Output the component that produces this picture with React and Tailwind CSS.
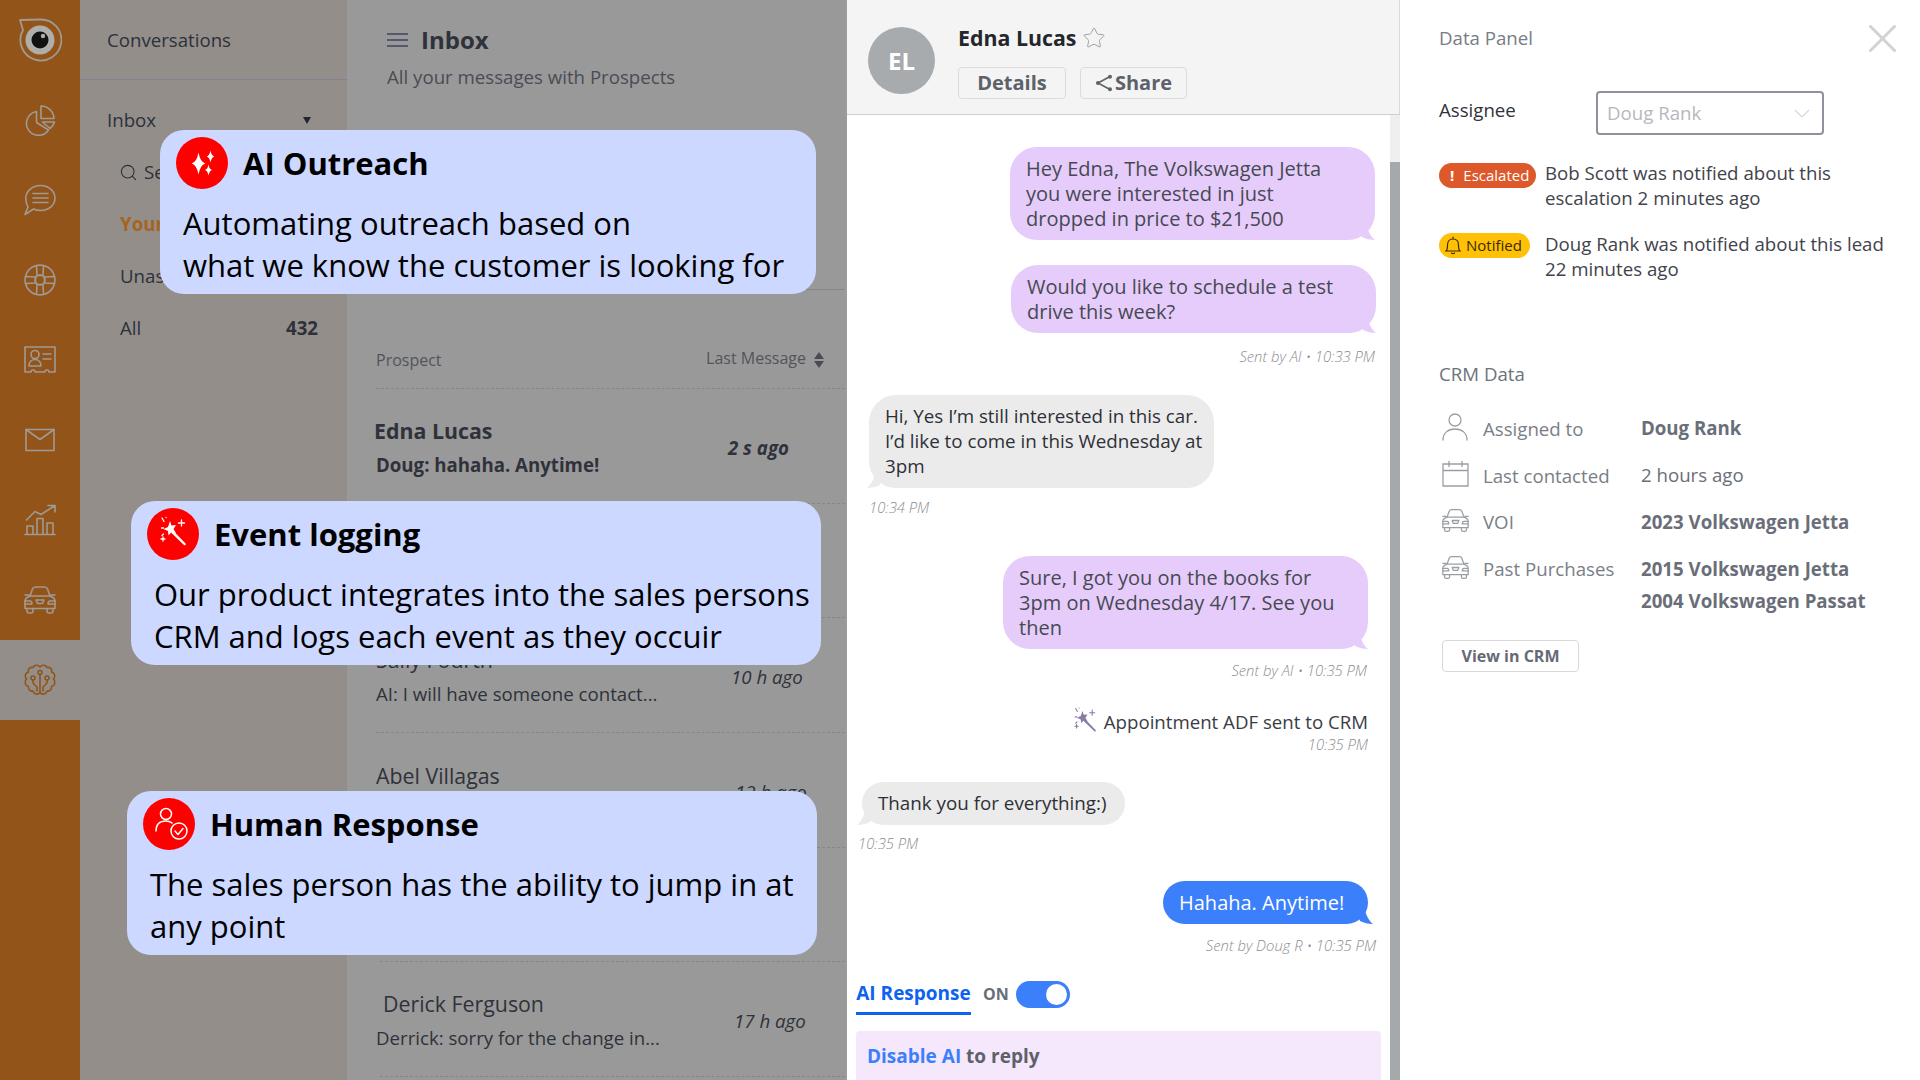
import React from "react";
import { Search, Star } from "lucide-react";

const FONT = { fontFamily: '"Open Sans", sans-serif' };

function Svg({ size = 32, color = "#a09a94", width = 1.6, children, className = "" }) {
  return (
    <svg width={size} height={size} viewBox="0 0 32 32" fill="none" stroke={color} strokeWidth={width} strokeLinecap="round" strokeLinejoin="round" className={className}>
      {children}
    </svg>
  );
}

function Logo() {
  return (
    <svg width="44" height="44" viewBox="0 0 44 44" fill="none">
      <path d="M2 2 L22 1.5 A20.5 20.5 0 1 1 5 12 Z" stroke="#a09a94" strokeWidth="1.8" strokeLinejoin="round" />
      <circle cx="22" cy="22" r="14.5" fill="#b0aeab" />
      <circle cx="22" cy="22" r="8.5" fill="#111" />
      <circle cx="25" cy="18" r="2.2" fill="#b0aeab" />
    </svg>
  );
}

const PieIcon = () => (
  <Svg>
    <path d="M12.5 7.5 A12 12 0 1 0 24.5 26 L12.5 18.5 Z" />
    <path d="M17 2 A13 13 0 0 1 30 14.5 L17 14.5 Z" />
    <path d="M18.5 18 L30.5 18 A13 13 0 0 1 26 24.5 Z" />
  </Svg>
);
const ChatIcon = () => (
  <Svg>
    <path d="M16.5 1.5 C25 1.5 31 7.5 31 14 C31 21 25 26.5 16.5 26.5 C14 26.5 11.5 26 9.5 25 L1 30.5 L4 23 C2.5 20.5 1.8 17.5 1.8 14 C1.8 7.5 8 1.5 16.5 1.5 Z" />
    <path d="M9 9.5 H24 M9 14 H24 M9 18.5 H24" />
  </Svg>
);
const BuoyIcon = () => (
  <Svg>
    <circle cx="16" cy="16" r="5" />
    <path d="M12.5 1.5 A15 15 0 0 1 19.5 1.5 L19 11.5 L13 11.5 Z" />
    <path d="M12.5 30.5 A15 15 0 0 0 19.5 30.5 L19 20.5 L13 20.5 Z" />
    <path d="M1.5 12.5 A15 15 0 0 0 1.5 19.5 L11.5 19 L11.5 13 Z" />
    <path d="M30.5 12.5 A15 15 0 0 1 30.5 19.5 L20.5 19 L20.5 13 Z" />
    <path d="M12.5 1.5 A15 15 0 0 0 1.5 12.5 M19.5 1.5 A15 15 0 0 1 30.5 12.5 M1.5 19.5 A15 15 0 0 0 12.5 30.5 M19.5 30.5 A15 15 0 0 0 30.5 19.5" />
  </Svg>
);
const CardIcon = () => (
  <Svg>
    <path d="M1 3 H31 V28 H25 A2 2 0 0 0 21 28 H11 A2 2 0 0 0 7 28 H1 Z" />
    <circle cx="11" cy="10.5" r="4" />
    <path d="M5 22 C5 17.5 8 15.5 11 15.5 C14 15.5 17 17.5 17 22 Z" />
    <path d="M19 10 H27 M19 15 H27" />
  </Svg>
);
const MailIcon = () => (
  <Svg>
    <path d="M2 5.5 H30 V26.5 H2 Z" />
    <path d="M2 5.5 L16 15.5 L30 5.5" />
  </Svg>
);
const ChartIcon = () => (
  <Svg>
    <path d="M1 30.5 H31" />
    <path d="M3 30 V22 H9 V30 M13 30 V14.5 H19 V30 M23 30 V19 H29 V30" />
    <path d="M2.5 16 L11 7.5 L17 10.5 L31 1.5 M24 1.5 H31 V8" />
  </Svg>
);

function CarIcon({ color = "#a09a94", size = 32, width = 1.6 }) {
  return (
    <Svg color={color} size={size} width={width}>
      <path d="M6 12 L8.5 5 C9 3.5 10 3 11.5 3 H20.5 C22 3 23 3.5 23.5 5 L26 12" />
      <path d="M1 11 H5 M27 11 H31" />
      <path d="M3 13.5 L6 12 H26 L29 13.5 C30.5 14.5 31 15.5 31 17 V24.5 H1 V17 C1 15.5 1.5 14.5 3 13.5 Z" />
      <path d="M3 24.5 V27 C3 28.5 4 29 5 29 H7 C8 29 9 28.5 9 27 V24.5 M23 24.5 V27 C23 28.5 24 29 25 29 H27 C28 29 29 28.5 29 27 V24.5" />
      <path d="M1 17 H6 C7.5 17 8 18 8 20 H1 M31 17 H26 C24.5 17 24 18 24 20 H31 M12 16 H20 L18.5 19.5 H13.5 Z" />
    </Svg>
  );
}

const BrainIcon = () => (
  <Svg color="#925418">
    <path d="M16 3 C14 0.5 10 0.8 9 3.5 C6 3 3.5 5 4.5 8 C1.5 9 0 12 2.5 15 C0 18 1.5 22 4.5 22.5 C4 25.5 6.5 27.5 9 27 C10 30.5 14 31 16 28.5 C18 31 22 30.5 23 27 C25.5 27.5 28 25.5 27.5 22.5 C30.5 22 32 18 29.5 15 C32 12 30.5 9 27.5 8 C28.5 5 26 3 23 3.5 C22 0.8 18 0.5 16 3 Z" />
    <circle cx="16" cy="8.5" r="2" />
    <path d="M16 10.5 V28" />
    <circle cx="9" cy="14" r="2" />
    <path d="M9 16 V19 L13 23 V27" />
    <circle cx="23" cy="14" r="2" />
    <path d="M23 16 V19 L19 23 V27" />
  </Svg>
);

const SparkleStar = ({ x, y, r }) => (
  <path d={`M${x} ${y - r} Q${x + r * 0.15} ${y - r * 0.15} ${x + r * 0.62} ${y} Q${x + r * 0.15} ${y + r * 0.15} ${x} ${y + r} Q${x - r * 0.15} ${y + r * 0.15} ${x - r * 0.62} ${y} Q${x - r * 0.15} ${y - r * 0.15} ${x} ${y - r} Z`} fill="#fff" />
);

const SparkIcon = () => (
  <svg width="52" height="52" viewBox="0 0 52 52">
    <SparkleStar x={22.5} y={26.5} r={11} />
    <SparkleStar x={34.5} y={19.5} r={6} />
    <SparkleStar x={32.5} y={33} r={5.5} />
  </svg>
);

function WandGlyph({ color = "#fff", size = 52, className = "" }) {
  return (
    <svg width={size} height={size} viewBox="0 0 52 52" fill={color} className={className}>
      <path d="M25.5 22 L38.5 35.5 C39.5 36.5 38 38 37 37 L23.5 24 Z" />
      <path d="M23 13 L24.5 17.5 L29 17 L26.5 21 L29 25 L24.5 24 L21.5 27.5 L21 23 L16.5 21 L21 19 Z" />
      <path d="M34.5 12 V18 M31.5 15 H37.5 M15 10 L17 13.5 M19 9.5 V9.6 M14.5 20 H16.5 M16.5 26 L15 27.5 M16 29 V33 M14 31 H18" stroke={color} strokeWidth="1.3" strokeLinecap="round" fill="none" />
    </svg>
  );
}

const HumanIcon = () => (
  <svg width="52" height="52" viewBox="0 0 52 52" fill="none" stroke="#fff" strokeWidth="1.5" strokeLinecap="round" strokeLinejoin="round">
    <circle cx="23" cy="16" r="5.5" />
    <path d="M13 33 C13 26 17 23 23 23 C25 23 27 23.5 29 25" />
    <circle cx="36" cy="33" r="8" />
    <path d="M32 33 L35 36.5 L40 30.5" />
  </svg>
);

function Callout({ className, icon, title, lines }) {
  return (
    <div className={`absolute z-10 h-[164px] rounded-[24px] bg-[#ccd8ff] text-black ${className}`}>
      <div className="flex items-center h-[66px] pl-[16px]">
        <div className="w-[52px] h-[52px] rounded-full bg-[#ff0000] shrink-0">{icon}</div>
        <div className="ml-[15px] text-[31px] font-bold leading-[42px]">{title}</div>
      </div>
      <div className="pl-[23px] mt-[6px] text-[31px] leading-[42px] whitespace-nowrap">
        {lines.map((line) => (
          <div key={line}>{line}</div>
        ))}
      </div>
    </div>
  );
}

const navIcons = [
  <PieIcon key="pie" />,
  <ChatIcon key="chat" />,
  <BuoyIcon key="buoy" />,
  <CardIcon key="card" />,
  <MailIcon key="mail" />,
  <ChartIcon key="chart" />,
  <CarIcon key="car" />,
];

function Sidebar() {
  return (
    <div className="w-[80px] shrink-0 bg-[#925418] flex flex-col">
      <div className="h-[80px] flex items-center justify-center">
        <Logo />
      </div>
      {navIcons.map((icon, i) => (
        <div key={i} className="h-[80px] flex items-center justify-center">
          {icon}
        </div>
      ))}
      <div className="h-[80px] bg-[#938e8a] flex items-center justify-center">
        <BrainIcon />
      </div>
    </div>
  );
}

function ConversationsPanel() {
  return (
    <div className="w-[267px] shrink-0 bg-[#938e8a] text-[18.67px] text-[#2d313b]">
      <div className="h-[80px] border-b border-[#7f828f] pl-[27px] flex items-center">Conversations</div>
      <div className="pt-[14px]">
        <div className="h-[52px] pl-[27px] pr-[36px] flex items-center justify-between">
          <span>Inbox</span>
          <span className="w-0 h-0 border-x-[4px] border-x-transparent border-t-[7px] border-t-[#22262f]" />
        </div>
        <div className="h-[52px] pl-[39px] flex items-center gap-[6px]">
          <Search size={19} strokeWidth={1.4} />
          <span>Search</span>
        </div>
        <div className="h-[52px] pl-[40px] flex items-center font-bold text-[#a5641f]">Your</div>
        <div className="h-[52px] pl-[40px] flex items-center">Unassigned</div>
        <div className="h-[52px] pl-[40px] pr-[29px] flex items-center justify-between">
          <span>All</span>
          <span className="font-bold">432</span>
        </div>
      </div>
    </div>
  );
}

function ProspectRow({ name, msg, time, bold, nameClass = "", msgClass = "", timeClass = "", lineClass = "ml-[29px]" }) {
  return (
    <div className={`h-[114.67px] border-b border-dashed border-[#85858a] pt-[4px] flex items-center ${lineClass}`}>
      <div className={`w-[350px] shrink-0 ${bold ? "font-bold" : ""}`}>
        <div className={`text-[21.33px] leading-[34px] ${nameClass}`}>{name}</div>
        <div className={`text-[18.67px] leading-[34px] ${msgClass}`}>{msg}</div>
      </div>
      <div className={`text-[18.67px] italic whitespace-nowrap ${bold ? "font-bold" : ""} ${timeClass}`}>{time}</div>
    </div>
  );
}

function ProspectsPanel() {
  return (
    <div className="w-[498px] shrink-0 bg-[#999999] text-[#2f323a]">
      <div className="h-[290px] border-b border-[#85858a] pl-[40px]">
        <div className="pt-[23px] flex items-center h-[57px]">
          <div className="w-[21px] flex flex-col gap-[4px]">
            <div className="h-[2px] bg-[#55586a]" />
            <div className="h-[2px] bg-[#55586a]" />
            <div className="h-[2px] bg-[#55586a]" />
          </div>
          <div className="ml-[13px] text-[24px] font-bold leading-[34px]">Inbox</div>
        </div>
        <div className="mt-[7px] text-[18.67px] leading-[26px] text-[#4a4c55]">All your messages with Prospects</div>
      </div>
      <div className="ml-[29px] h-[99px] border-b border-dashed border-[#85858a] flex items-center justify-between pr-[21px] pt-[41px] text-[16px] text-[#52545c]">
        <span>Prospect</span>
        <span className="flex items-center gap-[8px]">
          <span className="-mt-[4px]">Last Message</span>
          <span className="flex flex-col gap-[2px]">
            <span className="w-0 h-0 border-x-[5px] border-x-transparent border-b-[7px] border-b-[#4a4c55]" />
            <span className="w-0 h-0 border-x-[5px] border-x-transparent border-t-[7px] border-t-[#4a4c55]" />
          </span>
        </span>
      </div>
      <ProspectRow bold name="Edna Lucas" msg="Doug: hahaha. Anytime!" time="2 s ago" nameClass="-ml-[2px]" timeClass="ml-[2px]" />
      <ProspectRow />
      <ProspectRow name="Sally Fourth" msg="AI: I will have someone contact..." time="10 h ago" timeClass="ml-[5px]" />
      <ProspectRow name="Abel Villagas" msg="" time="12 h ago" nameClass="mb-[32px]" timeClass="ml-[9px]" />
      <ProspectRow lineClass="ml-[33px]" />
      <ProspectRow name="Derick Ferguson" msg="Derrick: sorry for the change in..." time="17 h ago" nameClass="pl-[3px]" msgClass="-ml-[4px]" timeClass="ml-[4px]" lineClass="ml-[33px]" />
    </div>
  );
}

function Bubble({ kind, className, tail = "", children }) {
  const styles = {
    ai: "bg-[#e6ccfa] text-[#464953] text-[20px]",
    them: "bg-[#ebebeb] text-[#2e3037] text-[18.8px]",
    me: "bg-[#3b7ffb] text-white text-[20px]",
  };
  const fill = { ai: "#e6ccfa", them: "#ebebeb", me: "#3b7ffb" }[kind];
  const left = kind === "them";
  return (
    <div className={`relative rounded-[27px] px-[16px] py-[9px] leading-[25px] ${styles[kind]} ${className}`}>
      {children}
      <svg width="16" height="14" viewBox="0 0 16 14" className={`absolute bottom-0 ${tail}`}>
        {left ? <path d="M16 0 H8 C7 5 4 11 0 14 C5 14 9 13 13 11 Z" fill={fill} /> : <path d="M0 0 H8 C9 5 12 11 16 14 C11 14 7 13 3 11 Z" fill={fill} />}
      </svg>
    </div>
  );
}

const Meta = ({ className, children }) => (
  <div className={`text-[14.8px] leading-[20px] italic font-light text-[#8c8d90] ${className}`}>{children}</div>
);

function ChatPanel() {
  return (
    <div className="w-[555px] shrink-0 border-l-[2px] border-[#9b9b9b] flex flex-col bg-white">
      <div className="h-[115px] shrink-0 bg-[#f4f4f4] border-b border-[#cfcfcf] border-r border-r-[#d8d8d8] flex pl-[21px] pt-[27px]">
        <div className="w-[67px] h-[67px] rounded-full bg-[#a7abad] text-white text-[24px] font-bold flex items-center justify-center">EL</div>
        <div className="ml-[23px]">
          <div className="flex items-center h-[24px] mt-[-1px]">
            <span className="text-[21.33px] font-bold text-[#24262c] leading-[24px]">Edna Lucas</span>
            <Star size={24} strokeWidth={1} className="ml-[6px] text-[#9ea1a6]" />
          </div>
          <div className="flex gap-[14px] mt-[17px] text-[20px] font-bold text-[#5d6169]">
            <div className="w-[108px] h-[32px] rounded-[4px] border border-[#dcdcdc] flex items-center justify-center">Details</div>
            <div className="w-[107px] h-[32px] rounded-[4px] border border-[#dcdcdc] flex items-center justify-center gap-[2px]">
              <svg width="18" height="18" viewBox="0 0 18 18" fill="none" stroke="#5d6169" strokeWidth="1.6">
                <path d="M15 2.5 L3 9 L15 15.5" />
                <circle cx="15" cy="2.8" r="1.2" fill="#5d6169" />
                <circle cx="3" cy="9" r="1.2" fill="#5d6169" />
                <circle cx="15" cy="15.2" r="1.2" fill="#5d6169" />
              </svg>
              Share
            </div>
          </div>
        </div>
      </div>
      <div className="flex flex-1 min-h-0">
        <div className="flex-1 flex flex-col overflow-hidden pt-[32px]">
          <Bubble kind="ai" tail="right-0" className="self-end mr-[15px] w-[365px]">
            Hey Edna, The Volkswagen Jetta you were interested in just dropped in price to $21,500
          </Bubble>
          <Bubble kind="ai" tail="right-0" className="self-end mr-[14px] w-[365px] mt-[25px]">
            Would you like to schedule a test drive this week?
          </Bubble>
          <Meta className="self-end mr-[15px] mt-[13px]">Sent by AI • 10:33 PM</Meta>
          <Bubble kind="them" tail="-left-[2px]" className="self-start ml-[22px] w-[345px] mt-[29px] whitespace-nowrap">
            Hi, Yes I’m still interested in this car.
            <br />
            I’d like to come in this Wednesday at
            <br />
            3pm
          </Bubble>
          <Meta className="self-start ml-[22px] mt-[9px]">10:34 PM</Meta>
          <Bubble kind="ai" tail="right-0" className="self-end mr-[22px] w-[365px] mt-[39px]">
            Sure, I got you on the books for 3pm on Wednesday 4/17. See you then
          </Bubble>
          <Meta className="self-end mr-[23px] mt-[11px]">Sent by AI • 10:35 PM</Meta>
          <div className="self-end mr-[22px] mt-[30px] flex items-center h-[24px] text-[18.67px] leading-[24px] text-[#3a3c44]">
            <WandGlyph color="#8a7ba6" size={44} className="-my-[10px] -mr-[6px]" />
            <span className="ml-[3px]">Appointment ADF sent to CRM</span>
          </div>
          <Meta className="self-end mr-[22px]">10:35 PM</Meta>
          <Bubble kind="them" tail="-left-[5px]" className="self-start ml-[15px] w-[263px] mt-[28px] whitespace-nowrap">
            Thank you for everything:)
          </Bubble>
          <Meta className="self-start ml-[11px] mt-[8px]">10:35 PM</Meta>
          <Bubble kind="me" tail="-right-[5px]" className="self-end mr-[22px] w-[205px] mt-[28px] whitespace-nowrap">
            Hahaha. Anytime!
          </Bubble>
          <Meta className="self-end mr-[14px] mt-[11px]">Sent by Doug R • 10:35 PM</Meta>
          <div className="flex items-center mt-[20px] ml-[9px] h-[40px]">
            <div className="h-[40px] w-[115px] border-b-[3px] border-[#0d62f0] text-[19px] font-bold text-[#0d62f0] leading-[36px] text-center">AI Response</div>
            <span className="ml-[12px] -mt-[2px] text-[16px] font-bold text-[#6a6d75]">ON</span>
            <div className="ml-[7px] -mt-[2px] w-[54px] h-[27px] rounded-full bg-[#3b7ffb] flex items-center justify-end pr-[3px]">
              <div className="w-[21px] h-[21px] rounded-full bg-white" />
            </div>
          </div>
          <div className="mt-[16px] mx-[9px] h-[60px] shrink-0 rounded-[4px] bg-[#f5e8fd] pl-[11px] pt-[11px] text-[19px] font-bold text-[#5d6169]">
            <span className="text-[#3b7ffb]">Disable AI</span> to reply
          </div>
        </div>
        <div className="w-[10px] shrink-0 flex flex-col">
          <div className="h-[47px] bg-[#efefef]" />
          <div className="flex-1 bg-[#a5a9ac]" />
        </div>
      </div>
    </div>
  );
}

function CrmRow({ icon, label, className = "", children }) {
  return (
    <div className={`flex ${className}`}>
      <div className="w-[44px] shrink-0 pl-[3px] flex justify-start">{icon}</div>
      <div className="w-[158px] shrink-0 text-[#7a7e87]">{label}</div>
      <div className="text-[#6a6e78]">{children}</div>
    </div>
  );
}

function DataPanel() {
  return (
    <div className="flex-1 pl-[39px] pr-[24px] text-[18.67px] bg-white">
      <div className="flex items-center justify-between h-[38px] mt-[19px] text-[#777c85]">
        <span>Data Panel</span>
        <svg width="27" height="27" viewBox="0 0 27 27" stroke="#d2d2d2" strokeWidth="3" strokeLinecap="round">
          <path d="M1.5 1.5 L25.5 25.5 M25.5 1.5 L1.5 25.5" />
        </svg>
      </div>
      <div className="flex items-start mt-[34px]">
        <div className="w-[157px] leading-[36px] text-[#30333b] mt-[1px]">Assignee</div>
        <div className="w-[228px] h-[44px] rounded-[4px] border-2 border-[#8d929b] flex items-center justify-between pl-[9px] pr-[12px] text-[#b5b8be]">
          <span>Doug Rank</span>
          <svg width="16" height="9" viewBox="0 0 16 9" fill="none" stroke="#d5d7da" strokeWidth="1.2">
            <path d="M1 1 L8 8 L15 1" />
          </svg>
        </div>
      </div>
      <div className="flex mt-[28px] text-[#3f434c] leading-[25px]">
        <div className="w-[106px] shrink-0">
          <div className="w-[97px] h-[25px] rounded-full bg-[#dd582b] text-white text-[15px] font-normal flex items-center pl-[11px] gap-[9px]">
            <span className="font-bold">!</span>
            <span>Escalated</span>
          </div>
        </div>
        <div className="-mt-[3px]">
          Bob Scott was notified about this
          <br />
          escalation 2 minutes ago
        </div>
      </div>
      <div className="flex mt-[23px] text-[#3f434c] leading-[25px]">
        <div className="w-[106px] shrink-0">
          <div className="w-[91px] h-[25px] rounded-full bg-[#ffc107] text-[#3a2a00] text-[15px] flex items-center pl-[6px] gap-[5px]">
            <svg width="16" height="20" viewBox="0 0 16 20" fill="none" stroke="#3a2a00" strokeWidth="1.2" strokeLinecap="round">
              <path d="M1 15 C2.5 14 2.5 12 2.5 9 C2.5 5.5 4.5 3 8 3 C11.5 3 13.5 5.5 13.5 9 C13.5 12 13.5 14 15 15 Z M8 1 V3 M6.5 17 C7 18 9 18 9.5 17" />
            </svg>
            <span>Notified</span>
          </div>
        </div>
        <div className="-mt-[2px]">
          Doug Rank was notified about this lead
          <br />
          22 minutes ago
        </div>
      </div>
      <div className="mt-[80px] leading-[26px] text-[#6e727b]">CRM Data</div>
      <div className="mt-[26px] leading-[30px]">
        <CrmRow
          label={<span className="block mt-[1px]">Assigned to</span>}
          icon={
            <svg width="26" height="28" viewBox="0 0 26 28" fill="none" stroke="#9a9ea5" strokeWidth="1.3" strokeLinecap="round">
              <circle cx="13" cy="7" r="6" />
              <path d="M1 27 C1 20 6 16 13 16 C20 16 25 20 25 27" />
            </svg>
          }
        >
          <span className="font-bold">Doug Rank</span>
        </CrmRow>
        <CrmRow
          className="mt-[16px]"
          label={<span className="block mt-[1px]">Last contacted</span>}
          icon={
            <svg width="27" height="27" viewBox="0 0 27 27" fill="none" stroke="#9a9ea5" strokeWidth="1.3">
              <path d="M1 4 H26 V26 H1 Z M1 10.5 H26 M7 1 V7 M20 1 V7" />
            </svg>
          }
        >
          2 hours ago
        </CrmRow>
        <CrmRow className="mt-[16px]" label="VOI" icon={<CarIcon color="#9a9ea5" size={27} width={1.5} />}>
          <span className="font-bold">2023 Volkswagen Jetta</span>
        </CrmRow>
        <CrmRow
          className="mt-[17px]"
          label="Past Purchases"
          icon={<CarIcon color="#9a9ea5" size={27} width={1.5} />}
        >
          <div className="font-bold">2015 Volkswagen Jetta</div>
          <div className="font-bold mt-[2px]">2004 Volkswagen Passat</div>
        </CrmRow>
      </div>
      <div className="mt-[24px] ml-[3px] w-[137px] h-[32px] rounded-[4px] border border-[#d8d8d8] flex items-center justify-center text-[16px] font-bold text-[#666a74]">View in CRM</div>
    </div>
  );
}

export default function App() {
  return (
    <div className="relative flex w-[1920px] h-[1080px] overflow-hidden bg-white" style={FONT}>
      <Sidebar />
      <ConversationsPanel />
      <ProspectsPanel />
      <ChatPanel />
      <DataPanel />
      <Callout
        className="left-[160px] top-[130px] w-[656px]"
        icon={<SparkIcon />}
        title="AI Outreach"
        lines={["Automating outreach based on", "what we know the customer is looking for"]}
      />
      <Callout
        className="left-[131px] top-[501px] w-[690px]"
        icon={<WandGlyph />}
        title="Event logging"
        lines={["Our product integrates into the sales persons", "CRM and logs each event as they occuir"]}
      />
      <Callout
        className="left-[127px] top-[791px] w-[690px]"
        icon={<HumanIcon />}
        title="Human Response"
        lines={["The sales person has the ability to jump in at", "any point"]}
      />
    </div>
  );
}
